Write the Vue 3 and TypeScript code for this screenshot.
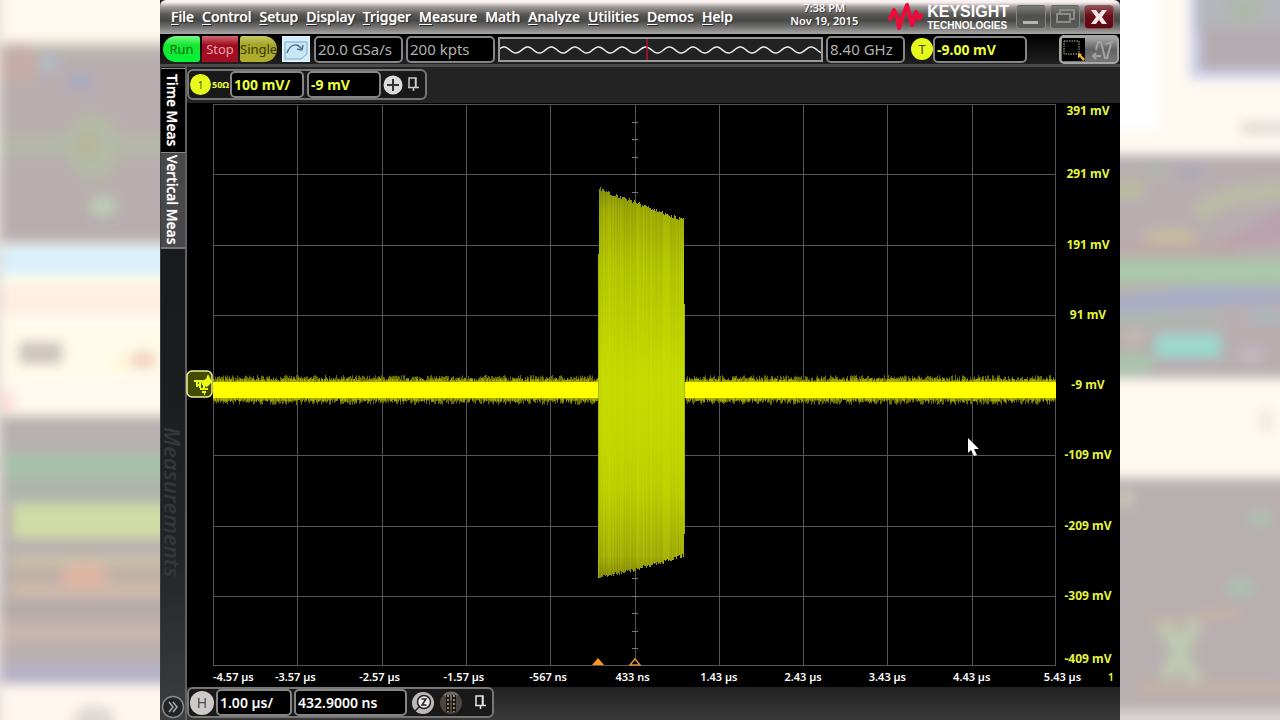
<script setup lang="ts">
import { ref } from 'vue'

const menus: string[] = ['File', 'Control', 'Setup', 'Display', 'Trigger', 'Measure', 'Math', 'Analyze', 'Utilities', 'Demos', 'Help']
const voltLabels: string[] = ['391 mV', '291 mV', '191 mV', '91 mV', '-9 mV', '-109 mV', '-209 mV', '-309 mV', '-409 mV']
const timeLabels: string[] = ['-4.57 µs', '-3.57 µs', '-2.57 µs', '-1.57 µs', '-567 ns', '433 ns', '1.43 µs', '2.43 µs', '3.43 µs', '4.43 µs', '5.43 µs']

const sampleRate = ref('20.0 GSa/s')
const memoryDepth = ref('200 kpts')
const bandwidth = ref('8.40 GHz')
const triggerLevel = ref('-9.00 mV')
const channelScale = ref('100 mV/')
const channelOffset = ref('-9 mV')
const timeScale = ref('1.00 µs/')
const timePosition = ref('432.9000 ns')
const activeTab = ref('Time Meas')

const W = 843
const H = 562
const colLines = Array.from({ length: 11 }, (_, i) => Math.min(W - 1, Math.round((i * W) / 10)) + 0.5)
const rowLines = Array.from({ length: 9 }, (_, i) => Math.min(H - 1, Math.round((i * H) / 8)) + 0.5)
const ticks = Array.from({ length: 31 }, (_, i) => Math.round(((i + 1) * H) / 32) + 0.5)

let seed = 7
function rnd(): number {
  seed = (seed * 16807) % 2147483647
  return seed / 2147483647
}

// Noise fringe around the quiet parts of the trace
function fringe(x0: number, x1: number, inner: number, outer: number): string {
  let d = ''
  for (let x = x0; x < x1; x++) {
    const top = 286 - inner - rnd() * outer
    const bottom = 286 + inner + rnd() * outer
    d += `M${x + 0.5} ${top.toFixed(1)}V${bottom.toFixed(1)}`
  }
  return d
}
const spans = [[0, 386], [473, 843]]
const fringeFaint = spans.map(([a, b]) => fringe(a, b, 9, 6)).join('')
const fringeStrong = spans.map(([a, b]) => fringe(a, b, 8, 4)).join('')

// Burst, one column per sample bin
interface Column { x: number; y: number; h: number; shade: number }
const burst: Column[] = []
for (let x = 386; x < 471; x++) {
  const t = (x - 386) / 86
  const top = 87 + t * 32 - rnd() * 4
  const bottom = 475 - t * t * 6 - t * 16 - rnd() * 4
  burst.push({ x, y: top, h: bottom - top, shade: rnd() * 0.22 })
}

let sine = ''
for (let x = 0; x <= 322; x++) {
  const y = 11 - 3 * Math.cos(((x - 4) * 2 * Math.PI) / 23.7)
  sine += `${x ? 'L' : 'M'}${x} ${y.toFixed(2)}`
}
</script>

<template>
  <div class="page">
    <svg class="backdrop" viewBox="0 0 160 720" preserveAspectRatio="none" aria-hidden="true">
      <rect width="160" height="720" fill="#fff9ef" />
      <g class="haze">
        <rect x="-30" y="46" width="230" height="197" fill="#b8aeb0" />
        <rect x="-30" y="42" width="230" height="6" fill="#d3d2c2" />
        <ellipse cx="18" cy="64" rx="22" ry="20" fill="#c5aca9" />
        <ellipse cx="48" cy="63" rx="10" ry="8" fill="#b2bec4" />
        <ellipse cx="80" cy="81" rx="11" ry="8" fill="#a5adc0" />
        <rect x="-30" y="135" width="230" height="21" fill="#b3b8a8" />
        <ellipse cx="93" cy="147" rx="27" ry="33" fill="#b4baa5" />
        <ellipse cx="87" cy="145" rx="9" ry="14" fill="#b7b598" />
        <ellipse cx="103" cy="206" rx="13" ry="11" fill="#bdcdb3" />
        <rect x="-30" y="246" width="230" height="28" fill="#d8effa" />
        <rect x="-30" y="274" width="230" height="7" fill="#fbffe8" />
        <rect x="-30" y="284" width="230" height="30" fill="#ffeee0" />
        <rect x="-30" y="322" width="230" height="56" fill="#fffbe8" />
        <rect x="19" y="342" width="43" height="22" fill="#cdc4be" />
        <ellipse cx="143" cy="360" rx="14" ry="9" fill="#f3d4c0" />
        <ellipse cx="121" cy="363" rx="9" ry="5" fill="#fff6ce" />
        <ellipse cx="2" cy="402" rx="14" ry="10" fill="#ffddd8" />
        <rect x="-30" y="416" width="230" height="266" fill="#b8b0b0" />
        <rect x="0" y="448" width="200" height="12" fill="#b0b8b0" />
        <rect x="5" y="456" width="195" height="22" fill="#a8c2aa" />
        <rect x="0" y="480" width="200" height="20" fill="#afb5ad" />
        <rect x="12" y="503" width="188" height="36" fill="#d0dba5" />
        <rect x="10" y="555" width="190" height="12" fill="#ccc2aa" />
        <rect x="10" y="566" width="190" height="14" fill="#bfb0a5" />
        <rect x="10" y="582" width="190" height="16" fill="#d0b9a8" />
        <ellipse cx="85" cy="576" rx="23" ry="14" fill="#deb5a4" />
        <rect x="0" y="602" width="200" height="14" fill="#b4aaa8" />
        <rect x="0" y="623" width="200" height="20" fill="#cab3ae" />
        <rect x="0" y="663" width="200" height="21" fill="#b5b1c5" />
        <rect x="-30" y="688" width="230" height="60" fill="#fff6ef" />
        <ellipse cx="94" cy="720" rx="21" ry="14" fill="#ded7d4" />
        <rect x="-30" y="-30" width="31" height="800" fill="#e3ddd8" />
      </g>
    </svg>

    <main class="scope">
      <header class="titlebar">
        <nav class="menus" aria-label="Main menu">
          <button v-for="m in menus" :key="m" type="button" class="menu"><span v-if="m !== 'Math'" class="key">{{ m[0] }}</span><template v-else>M</template>{{ m.slice(1) }}</button>
        </nav>
        <time class="clock" datetime="2015-11-19T19:38"><span>7:38 PM</span><span>Nov 19, 2015</span></time>
        <div class="brand">
          <svg width="36" height="30" viewBox="0 0 36 30" aria-hidden="true">
            <path d="M0 17L3 16L6 8L9 15L11 26L15 14L19 3L24 23L28 10L31 17L34 12" fill="none" stroke="#f00a3c" stroke-width="4" stroke-linejoin="round" />
          </svg>
          <div class="brand-text"><strong>KEYSIGHT</strong><span>TECHNOLOGIES</span></div>
        </div>
        <div class="window-buttons">
          <button type="button" class="win" aria-label="Minimize">
            <svg width="28" height="22" viewBox="0 0 28 22"><rect x="6" y="15" width="15" height="3" fill="#b4b4b4" /></svg>
          </button>
          <button type="button" class="win" aria-label="Restore">
            <svg width="28" height="22" viewBox="0 0 28 22"><path d="M9 7V4H23V13H20M6 8H19V16H6Z" fill="none" stroke="#8b8b8b" stroke-width="2" /></svg>
          </button>
          <button type="button" class="win close" aria-label="Close">
            <svg width="28" height="22" viewBox="0 0 28 22"><path d="M6 4H11L14 8L17 4H22L17 11L22 18H17L14 14L11 18H6L11 11Z" fill="#f1e6e4" /></svg>
          </button>
        </div>
      </header>

      <section class="toolbar" aria-label="Acquisition">
        <div class="run-group">
          <button type="button" class="run">Run</button>
          <button type="button" class="stop">Stop</button>
          <button type="button" class="single">Single</button>
        </div>
        <button type="button" class="auto" aria-label="Auto scale">
          <svg width="26" height="25" viewBox="0 0 26 25">
            <path d="M2 5H24V17L18 22H2Z" fill="#c9e6f4" stroke="#7fa9c4" />
            <path d="M4 16C7 7 15 5 19 13M19 13L20 8M19 13L14 12" fill="none" stroke="#52718c" stroke-width="1.500" />
          </svg>
        </button>
        <input v-model="sampleRate" class="field gray w-rate" aria-label="Sample rate">
        <input v-model="memoryDepth" class="field gray w-rate" aria-label="Memory depth">
        <div class="overview">
          <svg viewBox="0 0 322 21" preserveAspectRatio="none" aria-hidden="true">
            <path :d="sine" fill="none" stroke="#eeeeee" stroke-width="1.500" />
            <path d="M147.500 0V21" stroke="#b3132b" stroke-width="1.500" />
          </svg>
        </div>
        <input v-model="bandwidth" class="field gray w-band" aria-label="Bandwidth">
        <span class="ball yellow">T</span>
        <input v-model="triggerLevel" class="field yellow-text w-level" aria-label="Trigger level">
        <div class="modes">
          <button type="button" class="mode" aria-label="Zoom box">
            <svg width="28" height="25" viewBox="0 0 28 25">
              <rect x="1" y="1" width="23" height="23" fill="#000" />
              <rect x="3" y="4" width="15" height="13" fill="none" stroke="#c3ba8a" stroke-dasharray="1.500 1" />
              <path d="M17 16L21 17L20 18L24 22L22 24L19 20L17 21Z" fill="#f5b52b" />
            </svg>
          </button>
          <button type="button" class="mode" aria-label="Wave drag">
            <svg width="28" height="25" viewBox="0 0 28 25">
              <path d="M7 13L9 5L12 5L16 21L18 21L22 7M16 7L24 5M4 19H12M7 16L4 19L7 22" fill="none" stroke="#a2a2a2" stroke-width="2" />
            </svg>
          </button>
        </div>
      </section>

      <div class="body">
        <aside class="side">
          <div class="tabs" role="tablist">
            <button type="button" role="tab" class="tab" :class="{ active: activeTab === 'Time Meas' }" @click="activeTab = 'Time Meas'">Time Meas</button>
            <button type="button" role="tab" class="tab tall" :class="{ active: activeTab === 'Vertical Meas' }" @click="activeTab = 'Vertical Meas'">Vertical Meas</button>
          </div>
          <span class="ghost">Measurements</span>
          <button type="button" class="expand" aria-label="Expand panel">
            <svg width="24" height="24" viewBox="0 0 24 24">
              <circle cx="12" cy="12" r="10.500" fill="#222426" stroke="#85888a" stroke-width="1.500" />
              <path d="M8 7L12 12L8 17M12 7L16 12L12 17" fill="none" stroke="#a6a9aa" stroke-width="1.500" />
            </svg>
          </button>
        </aside>

        <div class="workspace">
          <section class="strip" aria-label="Channel 1">
            <div class="panel channel">
              <span class="ball yellow small">1</span>
              <span class="ohm">50Ω</span>
              <input v-model="channelScale" class="field yellow-text w-scale" aria-label="Vertical scale">
              <input v-model="channelOffset" class="field yellow-text w-scale offset" aria-label="Vertical offset">
              <button type="button" class="icon-button plus" aria-label="Add channel">
                <svg width="20" height="20" viewBox="0 0 20 20"><circle cx="10" cy="10" r="9.500" fill="#dcdcdc" /><path d="M10 4V16M4 10H16" stroke="#333" stroke-width="2" /></svg>
              </button>
              <button type="button" class="icon-button pin" aria-label="Pin">
                <svg width="14" height="18" viewBox="0 0 14 18"><path d="M3 11V2H10V11M2 11.500H13M7.500 12V15M9.500 2V11" fill="none" stroke="#c9c9c9" stroke-width="1.500" /></svg>
              </button>
            </div>
          </section>

          <section class="display" aria-label="Waveform">
            <div class="plot">
              <svg class="graph" :viewBox="`0 0 ${W} ${H}`" preserveAspectRatio="none" role="img" aria-label="Channel 1 burst">
                <defs>
                  <linearGradient id="burst" gradientUnits="userSpaceOnUse" x1="0" y1="84" x2="0" y2="476">
                    <stop offset="0" stop-color="#8a940c" />
                    <stop offset="0.060" stop-color="#a6b305" />
                    <stop offset="0.200" stop-color="#b9cd00" />
                    <stop offset="0.500" stop-color="#c8de00" />
                    <stop offset="0.780" stop-color="#c0d400" />
                    <stop offset="0.940" stop-color="#abb708" />
                    <stop offset="1" stop-color="#858a08" />
                  </linearGradient>
                  <linearGradient id="streak" gradientUnits="userSpaceOnUse" x1="0" y1="84" x2="0" y2="476">
                    <stop offset="0" stop-color="#4a5200" />
                    <stop offset="0.450" stop-color="#6a7400" stop-opacity="0.250" />
                    <stop offset="0.650" stop-color="#6a7400" stop-opacity="0.200" />
                    <stop offset="1" stop-color="#4a5200" />
                  </linearGradient>
                </defs>
                <g stroke="#565656" shape-rendering="crispEdges">
                  <line v-for="x in colLines" :key="'c' + x" :x1="x" :x2="x" y1="0" :y2="H" />
                  <line v-for="y in rowLines" :key="'r' + y" x1="0" :x2="W" :y1="y" :y2="y" />
                  <line v-for="y in ticks" :key="'t' + y" x1="419" x2="425" :y1="y" :y2="y" stroke="#777" />
                </g>
                <path :d="fringeFaint" stroke="#6c6f00" stroke-width="1" />
                <path :d="fringeStrong" stroke="#a5a900" stroke-width="1" />
                <rect x="0" y="278" width="386" height="16" fill="#ffff00" />
                <rect x="472" y="278" width="371" height="16" fill="#ffff00" />
                <g shape-rendering="crispEdges">
                  <rect v-for="c in burst" :key="c.x" :x="c.x" :y="c.y" width="1" :height="c.h" fill="url(#burst)" />
                  <rect v-for="c in burst" :key="'s' + c.x" :x="c.x" :y="c.y" width="1" :height="c.h" fill="url(#streak)" :opacity="c.shade" />
                </g>
                <path d="M385.500 150V474M471.500 200V430" stroke="#a4b200" />
                <path d="M379 561L385 554L391 561Z" fill="#ff9420" />
                <path d="M417 561L422 555L427 561Z" fill="#000" stroke="#e09038" stroke-width="1.500" />
              </svg>
              <span class="ground" aria-label="Channel 1 ground">
                <svg width="27" height="28" viewBox="0 0 27 28">
                  <rect x="1" y="1" width="25" height="26" rx="5" fill="#444b00" stroke="#f0f490" stroke-width="1.500" />
                  <path d="M8 11H16M10 15H14M11 11V17M14 12V18M14 19H22M16 22H20M18 24H19M18 12V18" stroke="#eaff12" stroke-width="2" />
                  <path d="M15 11L20 9L22 4L26 12L21 17L16 15Z" fill="#eaff12" />
                </svg>
              </span>
              <svg class="pointer" width="12" height="19" viewBox="0 0 12 19" aria-hidden="true">
                <path d="M0 0V15L3 12L6 18L9 17L6 11H11Z" fill="#fff" />
              </svg>
            </div>
            <ol class="volts"><li v-for="v in voltLabels" :key="v">{{ v }}</li></ol>
            <ol class="times"><li v-for="t in timeLabels" :key="t">{{ t }}</li></ol>
            <span class="marker">1</span>
          </section>

          <footer class="bottom">
            <div class="panel horizontal">
              <span class="ball silver">H</span>
              <input v-model="timeScale" class="field white w-time" aria-label="Time per division">
              <input v-model="timePosition" class="field white w-position" aria-label="Horizontal position">
              <button type="button" class="icon-button zoomer" aria-label="Zoom">
                <svg width="24" height="24" viewBox="0 0 24 24">
                  <circle cx="12" cy="12" r="11" fill="#bfb8b8" />
                  <circle cx="13" cy="11" r="6.500" fill="#eee" stroke="#222" stroke-width="1.500" />
                  <path d="M10.500 8H15L11 14H15.500M8 16L4 20" fill="none" stroke="#222" stroke-width="1.500" />
                </svg>
              </button>
              <button type="button" class="icon-button segments" aria-label="Segments">
                <svg width="24" height="24" viewBox="0 0 24 24">
                  <circle cx="12" cy="12" r="11" fill="#4a4543" />
                  <path d="M4 4A11 11 0 0 1 20 4L12 9Z" fill="#6d6867" />
                  <path d="M9 4V21M15 4V21" stroke="#151515" stroke-width="4" />
                  <path d="M9 4V21M15 4V21" stroke="#d1a67b" stroke-width="1.500" stroke-dasharray="2 2" />
                </svg>
              </button>
              <button type="button" class="icon-button pin" aria-label="Pin">
                <svg width="14" height="18" viewBox="0 0 14 18"><path d="M3 11V2H10V11M2 11.500H13M7.500 12V15M9.500 2V11" fill="none" stroke="#e4e4e4" stroke-width="1.500" /></svg>
              </button>
            </div>
          </footer>
        </div>
      </div>
    </main>

    <svg class="backdrop" viewBox="0 0 160 720" preserveAspectRatio="none" aria-hidden="true">
      <rect width="160" height="720" fill="#fff9f2" />
      <g class="haze">
        <rect x="-30" y="-30" width="70" height="160" fill="#ffffff" />
        <rect x="70" y="-30" width="130" height="109" fill="#cbd0ec" />
        <rect x="76" y="-30" width="130" height="60" fill="#b4b7bb" />
        <rect x="80" y="26" width="130" height="44" fill="#b5acb1" />
        <ellipse cx="125" cy="10" rx="18" ry="12" fill="#adb8a9" />
        <rect x="122" y="123" width="60" height="10" fill="#ddd4ce" />
        <rect x="-30" y="155" width="230" height="223" fill="#b8aeb0" />
        <ellipse cx="70" cy="172" rx="10" ry="8" fill="#a8a9ba" />
        <ellipse cx="36" cy="170" rx="10" ry="6" fill="#adb9ae" />
        <ellipse cx="8" cy="190" rx="18" ry="11" fill="#b9bba2" />
        <path d="M76 214C105 194 130 190 190 192" fill="none" stroke="#b9bda5" stroke-width="18" />
        <ellipse cx="50" cy="237" rx="27" ry="8" fill="#c9bd9e" />
        <rect x="-30" y="244" width="150" height="9" fill="#c1a6a6" />
        <path d="M90 250L170 205V240Z" fill="#bca0ae" />
        <rect x="-30" y="258" width="230" height="27" fill="#abc7a9" />
        <path d="M-20 300L80 287L190 290V303L80 306L-20 314Z" fill="#a9aeca" />
        <rect x="-30" y="312" width="130" height="14" fill="#aeb7b1" />
        <ellipse cx="14" cy="337" rx="12" ry="6" fill="#c7bbb5" />
        <rect x="35" y="334" width="66" height="24" fill="#9cd9ce" />
        <ellipse cx="10" cy="363" rx="25" ry="13" fill="#abc2ae" />
        <ellipse cx="145" cy="317" rx="18" ry="5" fill="#a9bbbc" />
        <ellipse cx="132" cy="355" rx="13" ry="8" fill="#c3b9c0" />
        <rect x="-30" y="383" width="230" height="92" fill="#fffaf0" />
        <ellipse cx="146" cy="421" rx="8" ry="12" fill="#f1e9e3" />
        <rect x="-30" y="478" width="230" height="235" fill="#b8afb1" />
        <ellipse cx="5" cy="498" rx="10" ry="9" fill="#c7c6b4" />
        <ellipse cx="140" cy="518" rx="12" ry="10" fill="#b0beb1" />
        <ellipse cx="120" cy="587" rx="14" ry="11" fill="#afbeb2" />
        <path d="M30 617C50 630 70 615 120 613M20 688C60 686 80 688 170 689" fill="none" stroke="#c3b2a6" stroke-width="12" />
        <path d="M44 624L76 682M76 622L46 678" stroke="#bfcab0" stroke-width="15" />
        <rect x="-30" y="710" width="230" height="40" fill="#ddd5d2" />
      </g>
    </svg>
  </div>
</template>

<style>
body { margin: 0; background: #fff9ef; }
</style>

<style scoped>
* { box-sizing: border-box; }
.page {
  display: grid;
  grid-template-columns: 1fr 6fr 1fr;
  min-height: 100vh;
  overflow: hidden;
  font-family: "Noto Sans", "Open Sans", sans-serif;
  color: #fff;
}
.backdrop { display: block; width: 100%; height: 100%; }
.haze { filter: blur(6px); }
button { margin: 0; padding: 0; border: 0; background: none; font: inherit; color: inherit; cursor: pointer; }
svg { display: block; }
.scope { display: flex; flex-direction: column; min-width: 0; background: #242324; }

.titlebar {
  display: flex;
  align-items: center;
  height: 34px;
  padding: 0 6px 0 11px;
  border-radius: 6px 6px 0 0;
  background: linear-gradient(#fff4f4 0, #f3eaea 8%, #a09c9a 20%, #5a5955 42%, #464844 60%, #6e6e6c 78%, #aaa8a6 100%);
}
.menus { display: flex; gap: 8px; }
.menu { font-size: 14px; line-height: 20px; font-weight: 500; text-shadow: 0 0 1px #ddd, 1px 1px 1px #222; }
.key { text-decoration: underline; text-underline-offset: 2px; }
.clock { display: flex; flex-direction: column; align-items: center; margin-left: auto; font-size: 11px; line-height: 13px; font-weight: 600; text-shadow: 1px 1px 1px #333; padding-bottom: 6px; }
.brand { display: flex; align-items: center; margin-left: 30px; gap: 3px; }
.brand-text { display: flex; flex-direction: column; font-family: "Liberation Sans", Arial, sans-serif; font-size: 10px; line-height: 11px; font-weight: 600; }
.brand-text strong { font-size: 16px; line-height: 16px; }
.window-buttons { display: flex; gap: 4px; margin-left: 7px; }
.win { display: grid; place-items: center; width: 30px; height: 24px; border: 1px solid #858582; border-top-color: #666; border-radius: 4px; background: linear-gradient(#7c7c79, #4f504d 45%, #5b5c59); }
.close { border-color: #8c5659; background: linear-gradient(#8d5155, #6b0d1b 45%, #5a0713); }

.toolbar {
  display: flex;
  align-items: center;
  gap: 3px;
  height: 33px;
  padding: 0 1px 0 3px;
  border-bottom: 3px solid #4b4b4b;
  background: linear-gradient(#000, #202020);
}
.run-group { display: flex; gap: 2px; margin-right: 2px; }
.run-group button { width: 37px; height: 26px; font-size: 13px; line-height: 26px; }
.run-group .run { border-radius: 16px 3px 3px 16px; background: linear-gradient(#7cf78c, #12e92c 35%, #09f03a); color: #176b22; }
.run-group .stop { width: 36px; background: linear-gradient(#d06a72, #a00d20 35%, #a30f22); color: #f1a2a7; }
.run-group .single { border-radius: 3px 16px 16px 3px; background: linear-gradient(#c9c76a, #a6a423 35%, #b0ae2e); color: #39390f; }
.auto { width: 28px; height: 26px; margin-right: 1px; border: 1px solid #e2f6ff; background: #d3eefa; }
.field { min-width: 0; height: 27px; padding: 0 2px; border: 2px solid #858585; border-radius: 5px; background: #000; font: inherit; font-size: 15px; line-height: 20px; outline: none; }
.gray { color: #b0b0b0; }
.white { color: #fff; font-weight: 600; font-size: 14px; }
.yellow-text { color: #eaff3a; font-weight: 700; font-size: 14px; }
.w-rate { width: 89px; }
.w-band { width: 79px; }
.w-level { width: 94px; margin-left: -3px; }
.w-scale { width: 74px; }
.w-time { width: 76px; }
.w-position { width: 113px; }
.overview { flex: 1; height: 25px; min-width: 0; border: 2px solid #9a9a9a; background: #232223; }
.overview svg { width: 100%; height: 100%; }
.ball { display: grid; place-items: center; flex: none; width: 22px; height: 22px; border-radius: 50%; font-size: 13px; line-height: 20px; }
.yellow { background: #e6fb1c; color: #4a5012; }
.toolbar .ball { margin-left: 3px; }
.modes { display: flex; margin-left: 29px; border: 2px solid #a6a6a6; border-radius: 5px; background: linear-gradient(#a9a9a9, #636363 50%, #777); }
.mode { width: 28px; overflow: hidden; }

.body { display: flex; flex: 1; min-height: 0; }
.side { display: flex; flex-direction: column; align-items: center; width: 27px; padding-top: 1px; border-right: 2px solid #616161; border-left: 1px solid #3a3a3a; background: linear-gradient(#151719, #1b1e20 50%, #222527 75%, #3c3f41); }
.tabs { display: flex; flex-direction: column; width: 100%; }
.tab { width: 100%; height: 84px; border-top: 1px solid #8a8a8a; background: #48474a; writing-mode: vertical-rl; font-size: 14px; line-height: 26px; font-weight: 500; text-align: center; text-shadow: 0 0 1px #fff; }
.tall { height: 97px; border-bottom: 2px solid #777; }
.tab.active { background: #000; }
.ghost { margin-top: auto; margin-bottom: 118px; writing-mode: vertical-rl; font-size: 22px; line-height: 24px; font-style: italic; font-weight: 600; color: #33373a; }
.expand { flex: none; margin-bottom: 1px; }

.workspace { display: flex; flex-direction: column; flex: 1; min-width: 0; }
.strip { height: 36px; padding-top: 2px; }
.panel { display: flex; align-items: center; width: max-content; height: 31px; padding: 0 5px 0 1px; border: 2px solid #767676; border-radius: 6px; background: #1a191a; }
.channel { gap: 1px; }
.small { width: 21px; height: 21px; font-size: 10px; }
.ohm { width: 17px; font-size: 9px; line-height: 12px; font-weight: 700; color: #eaff3a; }
.offset { margin-left: 2px; }
.plus { margin-left: 1px; }
.channel .pin { margin-left: 2px; }
.icon-button { flex: none; }

.display {
  display: grid;
  flex: 1;
  grid-template-columns: 26px minmax(0, 1fr) 64px;
  grid-template-rows: minmax(0, 1fr) 21px;
  padding-top: 1px;
  background: #000;
}
.plot { position: relative; grid-column: 2; min-height: 0; }
.graph { position: absolute; inset: 0; width: 100%; height: 100%; }
.ground { position: absolute; left: -27px; top: calc(50% - 15px); }
.pointer { position: absolute; left: 90%; top: 60%; margin: -3px 0 0 -4px; }
ol { display: grid; margin: 0; padding: 0; list-style: none; white-space: nowrap; }
.volts { grid-template-rows: 1fr repeat(7, 2fr) 1fr; place-items: center; font-size: 12px; line-height: 14px; font-weight: 700; color: #e4f53a; }
.volts li:first-child { align-self: start; }
.volts li:last-child { align-self: end; }
.times { grid-row: 2; grid-column: 2; grid-template-columns: minmax(0, 1fr) repeat(9, minmax(0, 2fr)) minmax(0, 1fr); place-items: center; font-size: 11px; line-height: 16px; font-weight: 600; }
.times li:nth-child(n + 2) { padding-right: 4px; }
.times li:nth-child(n + 7) { padding-right: 0; }
.times li:first-child { justify-self: start; }
.times li:last-child { justify-self: start; padding-left: 30px; }
.marker { grid-row: 2; grid-column: 3; align-self: center; justify-self: end; padding-right: 6px; font-size: 11px; line-height: 16px; font-weight: 600; color: #e4f53a; }

.bottom { height: 33px; background: linear-gradient(#232223, #3a393a); }
.horizontal { gap: 2px; }
.silver { width: 24px; height: 24px; background: #cfcaca; color: #4a4a4a; font-size: 14px; }
.zoomer { margin-left: 2px; }
.segments { margin-left: 2px; }
.horizontal .pin { margin-left: 8px; }
</style>
